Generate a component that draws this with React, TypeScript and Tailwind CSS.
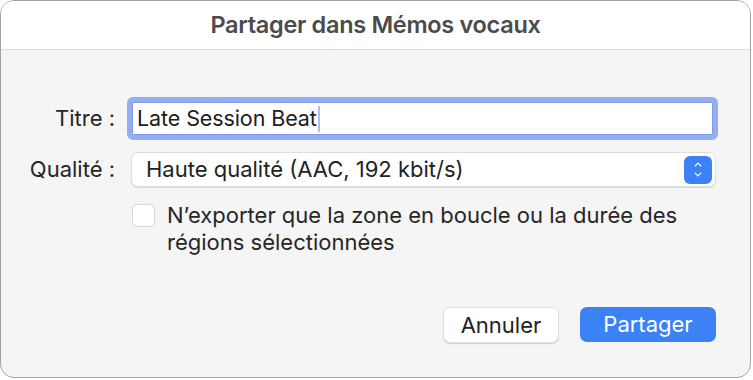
import { ChevronUp, ChevronDown } from 'lucide-react';

export default function App() {
  return (
    <div className="w-[753px] h-[380px] bg-white" style={{ fontFamily: 'Inter, "Noto Sans", sans-serif' }}>
      <div className="w-[751px] h-[378px] rounded-[14px] border border-[#a3a3a3] overflow-hidden flex flex-col bg-[#f5f5f5]">
        {/* Title bar */}
        <div className="h-[49px] shrink-0 bg-white border-b border-[#dcdcdc] flex items-center justify-center">
          <h1 className="text-[23.5px] font-semibold text-[#4b4b4b] tracking-[-0.3px]">Partager dans Mémos vocaux</h1>
        </div>

        {/* Form */}
        <div className="flex-1 flex flex-col pl-[27px] pr-[32px] pt-[47px]">
          <div className="flex items-center gap-[12px]">
            <label className="w-[87px] text-right text-[22px] text-[#262626]">Titre :</label>
            <div className="flex-1 h-[43px] rounded-[6px] border-[5px] border-[#93aef2] bg-white flex items-center px-[5px] shadow-[inset_0_0_0_1px_#7f9ceb]">
              <span className="text-[21.5px] text-[#202020] tracking-[-0.1px]">Late Session Beat</span>
              <span className="w-[2px] h-[26px] bg-[#a9bff5] ml-[1px]" />
            </div>
          </div>

          <div className="flex items-center gap-[16px] mt-[12px]">
            <label className="w-[87px] text-right text-[22px] text-[#262626]">Qualité :</label>
            <div className="w-[585px] h-[35px] rounded-[7px] bg-white border border-[#dedede] shadow-[0_1px_1px_rgba(0,0,0,0.12)] flex items-center pl-[14px] pr-[3px]">
              <span className="flex-1 text-[22px] text-[#222]">Haute qualité (AAC, 192 kbit/s)</span>
              <div className="w-[28px] h-[28px] rounded-[6px] bg-[#3b82f6] flex flex-col items-center justify-center">
                <ChevronUp className="w-[16px] h-[11px] text-white -mb-[1px]" strokeWidth={2.8} />
                <ChevronDown className="w-[16px] h-[11px] text-white" strokeWidth={2.8} />
              </div>
            </div>
          </div>

          <div className="flex items-start gap-[12px] mt-[16px] ml-[104px]">
            <div className="w-[23px] h-[23px] mt-[1px] rounded-[5px] bg-white border border-[#d6d6d6] shrink-0" />
            <p className="text-[22px] leading-[27px] text-[#262626] -mt-[1px]">
              N’exporter que la zone en boucle ou la durée des
              <br />
              régions sélectionnées
            </p>
          </div>

          <div className="flex justify-end gap-[21px] mt-auto mb-[34px] mr-[2px]">
            <button className="w-[116px] h-[36px] rounded-[7px] bg-white border border-[#e0e0e0] shadow-[0_1px_1px_rgba(0,0,0,0.15)] text-[22px] text-[#222]">
              Annuler
            </button>
            <button className="w-[136px] h-[35px] rounded-[7px] bg-[#3b82f6] text-[22px] text-white">
              Partager
            </button>
          </div>
        </div>
      </div>
    </div>
  );
}
